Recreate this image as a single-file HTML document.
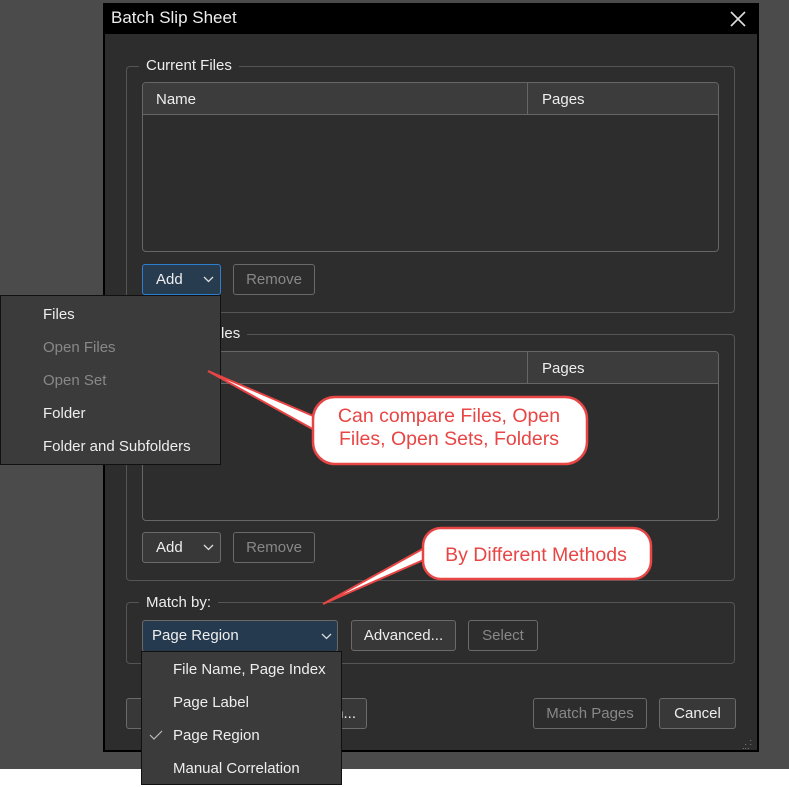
<!DOCTYPE html>
<html><head><style>
*{margin:0;padding:0;box-sizing:border-box}
body{width:789px;height:787px;background:#4b4b4b;position:relative;overflow:hidden;font-family:"Liberation Sans",sans-serif;font-size:15px;color:#eee}
.a{position:absolute}
.btn{position:absolute;border:1px solid #6a6a6a;border-radius:3px;background:#383838;color:#eee;text-align:center;line-height:29px;font-size:15px}
.dis{color:#888;background:#2d2d2d}
.grp{position:absolute;border:1px solid #555;border-radius:4px}
.lbl{position:absolute;background:#2d2d2d;padding:0 7px;font-size:15px;color:#eee}
.tbl{position:absolute;border:1px solid #666;border-radius:4px;overflow:hidden}
.th{height:32px;background:#3c3c3c;border-bottom:1px solid #666;position:relative}
.menu{position:absolute;background:#3b3b3b;border:1px solid #111}
.mi{position:absolute;font-size:15px}
</style></head><body>
<div class="a" style="left:0;top:769px;width:789px;height:18px;background:#fff"></div>
<div class="a" style="left:103px;top:3px;width:656px;height:749px;background:#2d2d2d;border:2px solid #000"></div>
<div class="a" style="left:103px;top:3px;width:656px;height:31px;background:#000"></div>
<div class="a" style="left:111px;top:8px;font-size:17px;color:#eee">Batch Slip Sheet</div>
<svg class="a" style="left:730px;top:11px" width="16" height="16"><path d="M1 1L15 15M15 1L1 15" stroke="#ddd" stroke-width="1.6"/></svg>

<div class="grp" style="left:126px;top:66px;width:609px;height:247px"></div>
<div class="lbl" style="left:139px;top:57px">Current Files</div>
<div class="tbl" style="left:142px;top:82px;width:577px;height:170px"><div class="th"><span class="a" style="left:13px;top:8px">Name</span><div class="a" style="left:384px;top:0;width:1px;height:32px;background:#666"></div><span class="a" style="left:399px;top:8px">Pages</span></div></div>
<div class="btn" style="left:142px;top:264px;width:79px;height:31px;border-color:#2f7fd0;background:#283c50;text-align:left;padding-left:13px">Add<svg class="a" style="left:60px;top:11px" width="11" height="7"><path d="M1 1L5.5 5.5L10 1" stroke="#ddd" fill="none" stroke-width="1.3"/></svg></div>
<div class="btn dis" style="left:233px;top:264px;width:82px;height:31px">Remove</div>

<div class="grp" style="left:126px;top:334px;width:609px;height:247px"></div>
<div class="lbl" style="left:139px;top:325px">Selected Files</div>
<div class="tbl" style="left:142px;top:351px;width:577px;height:170px"><div class="th"><span class="a" style="left:13px;top:8px">Name</span><div class="a" style="left:384px;top:0;width:1px;height:32px;background:#666"></div><span class="a" style="left:399px;top:8px">Pages</span></div></div>
<div class="btn" style="left:142px;top:532px;width:79px;height:31px;text-align:left;padding-left:13px">Add<svg class="a" style="left:60px;top:11px" width="11" height="7"><path d="M1 1L5.5 5.5L10 1" stroke="#ddd" fill="none" stroke-width="1.3"/></svg></div>
<div class="btn dis" style="left:233px;top:532px;width:82px;height:31px">Remove</div>

<div class="grp" style="left:126px;top:602px;width:609px;height:62px"></div>
<div class="lbl" style="left:139px;top:594px">Match by:</div>
<div class="btn" style="left:142px;top:620px;width:196px;height:32px;background:#253a4f;text-align:left;padding-left:9px">Page Region<svg class="a" style="left:178px;top:12px" width="11" height="7"><path d="M1 1L5.5 5.5L10 1" stroke="#ddd" fill="none" stroke-width="1.3"/></svg></div>
<div class="btn" style="left:351px;top:620px;width:105px;height:31px">Advanced...</div>
<div class="btn dis" style="left:468px;top:620px;width:70px;height:31px">Select</div>

<div class="btn" style="left:126px;top:698px;width:80px;height:31px"></div>
<div class="btn" style="left:240px;top:698px;width:127px;height:31px;text-align:right;padding-right:10px">...n...</div>
<div class="btn dis" style="left:533px;top:698px;width:114px;height:31px">Match Pages</div>
<div class="btn" style="left:659px;top:698px;width:77px;height:31px">Cancel</div>
<div class="a" style="left:742px;top:736px;color:#888;font-size:9px;line-height:4px">&nbsp;&nbsp;&nbsp;.<br>&nbsp;.&nbsp;.<br>...</div>

<div class="menu" style="left:141px;top:651px;width:201px;height:134px">
<div class="mi" style="left:31px;top:9px">File Name, Page Index</div>
<div class="mi" style="left:31px;top:42px">Page Label</div>
<svg class="a" style="left:7px;top:78px" width="14" height="11"><path d="M1 5L5 9L13 1" stroke="#bbb" fill="none" stroke-width="1.2"/></svg>
<div class="mi" style="left:31px;top:75px">Page Region</div>
<div class="mi" style="left:31px;top:108px">Manual Correlation</div>
</div>

<div class="menu" style="left:0;top:295px;width:221px;height:170px">
<div class="mi" style="left:42px;top:10px">Files</div>
<div class="mi" style="left:42px;top:43px;color:#888">Open Files</div>
<div class="mi" style="left:42px;top:76px;color:#888">Open Set</div>
<div class="mi" style="left:42px;top:109px">Folder</div>
<div class="mi" style="left:42px;top:142px">Folder and Subfolders</div>
</div>

<svg class="a" style="left:0;top:0" width="789" height="787">
<path d="M208 371L318 418L318 432Z" fill="#fff" stroke="#e84545" stroke-width="2"/>
<rect x="313" y="397" width="274" height="67" rx="22" fill="#fff" stroke="#e84545" stroke-width="2.5"/>
<path d="M318 419L318 431" stroke="#fff" stroke-width="4"/>
<path d="M323 604L428 558L428 546Z" fill="#fff" stroke="#e84545" stroke-width="2"/>
<rect x="423" y="528" width="228" height="51" rx="18" fill="#fff" stroke="#e84545" stroke-width="2.5"/>
<path d="M427 547L427 557" stroke="#fff" stroke-width="4"/>
<text x="449" y="422" font-family="Liberation Sans" font-size="19.5" fill="#e84545" text-anchor="middle">Can compare Files, Open</text>
<text x="449" y="445" font-family="Liberation Sans" font-size="19.5" fill="#e84545" text-anchor="middle">Files, Open Sets, Folders</text>
<text x="536" y="561" font-family="Liberation Sans" font-size="19.5" fill="#e84545" text-anchor="middle">By Different Methods</text>
</svg>
</body></html>
